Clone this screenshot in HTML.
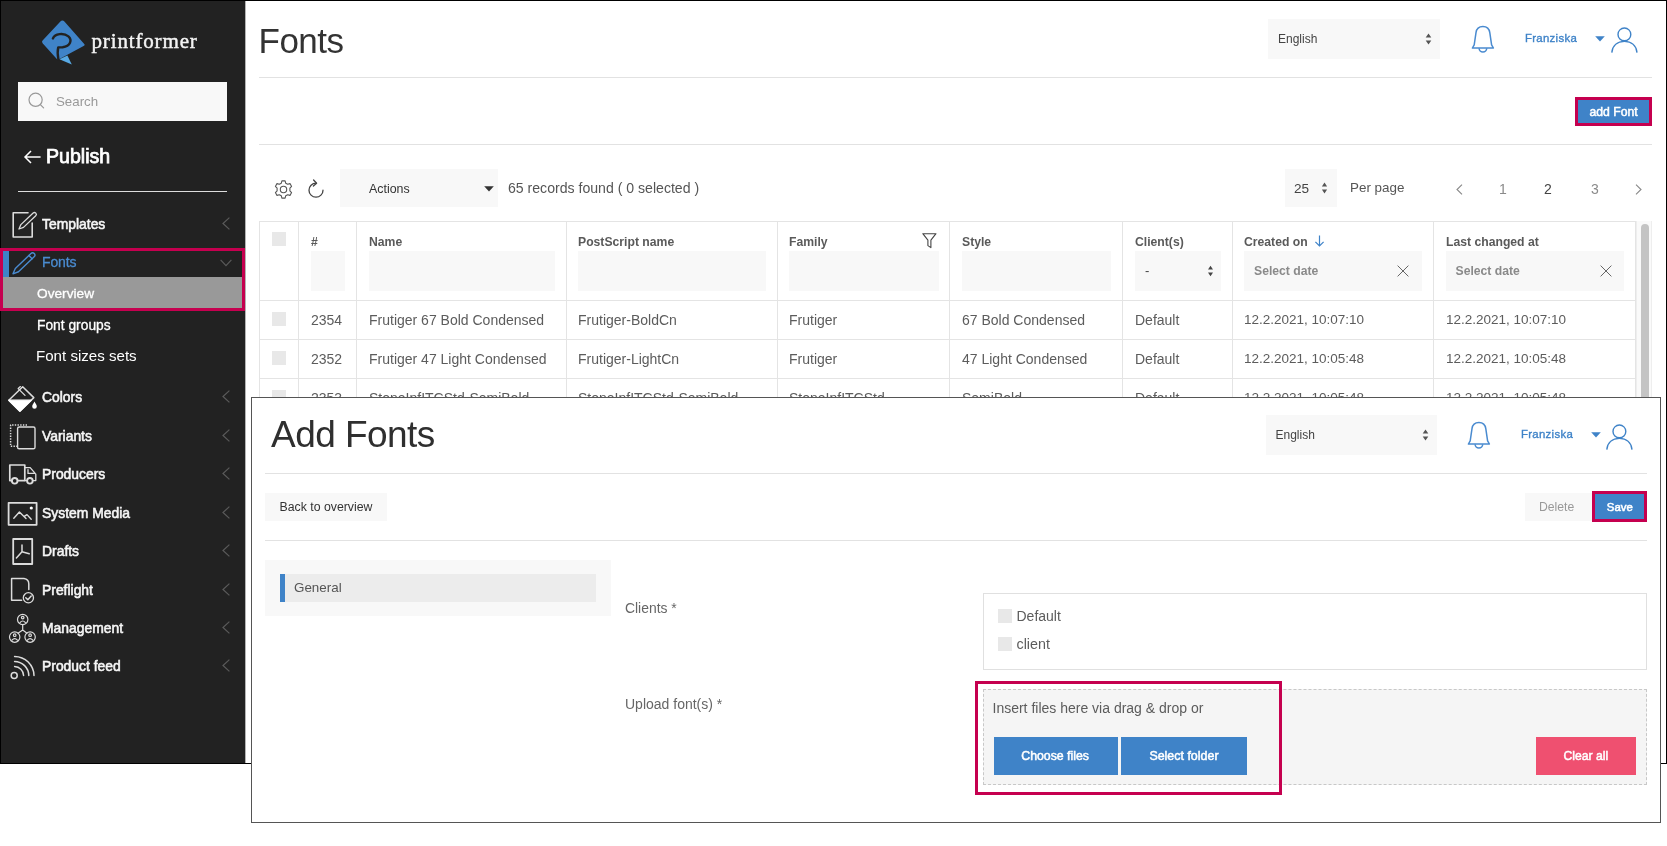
<!DOCTYPE html>
<html>
<head>
<meta charset="utf-8">
<title>Fonts</title>
<style>
*{box-sizing:border-box;margin:0;padding:0}
html,body{width:1667px;height:846px;background:#fff;overflow:hidden}
body{will-change:transform;font-family:"Liberation Sans",sans-serif;color:#333;position:relative;font-size:13px}
.a{position:absolute}
.t{position:absolute;white-space:nowrap;line-height:20px;height:20px}
.b{font-weight:700}
svg{position:absolute;overflow:visible}
/* frames */
#s1{left:0;top:0;width:1667px;height:764px;border:1px solid #000;background:#fff}
#side{left:1px;top:1px;width:244px;height:762px;background:#222}
#s2{left:251px;top:397px;width:1410px;height:426px;border:1px solid #555;background:#fff}
.hr{position:absolute;height:1px;background:#e2e2e2}
.m{color:#f6f6f6;font-size:13.9px;left:42px;-webkit-text-stroke:.55px #f6f6f6}
.chev{left:222px;width:8px;height:13px}
.fbox{position:absolute;background:#f8f8f8}
.vl{position:absolute;width:1px;background:#e4e4e4}
.hl{position:absolute;height:1px;background:#e4e4e4}
.cb{position:absolute;width:14px;height:14px;background:#e8e8e8}
.th{font-size:12.2px;font-weight:700;color:#5a5a5a}
.td{font-size:14px;color:#5c5c5c}
.dt{font-size:13.5px}
.pink{position:absolute;border:2px solid #c5004f}
</style>
</head>
<body>
<!-- ============ SCREEN 1 ============ -->
<div id="s1" class="a"></div>
<div id="side" class="a"></div>
<div class="a" style="left:245px;top:1px;width:1px;height:762px;background:#b4b4b4"></div>

<!--SIDEBAR-->
<!-- logo -->
<svg class="a" style="left:0;top:0" width="246" height="80" viewBox="0 0 246 80">
  <path d="M62.4 20.6 Q61.2 20.6 60.4 21.6 L42.6 40.6 Q41.4 41.9 42.6 43.2 L56.6 58.8 Q57.6 59.9 59 59.3 L83.6 46 Q85.6 44.8 83.8 43.4 L64.4 21.6 Q63.5 20.6 62.4 20.6Z" fill="#3f83c8"/>
  <path d="M59.4 59.2 L67.4 55.6 L71.8 64.6 Z" fill="#58a9e4"/>
  <path d="M52.9 38.4 C55 33.6 63.6 32.6 68.4 36.4 C72.4 40 70.6 46.4 62.6 47.2 L58.2 47.4 C57.4 50.8 57.6 55 58.4 59.4" fill="none" stroke="#222" stroke-width="2.4" stroke-linecap="round" stroke-linejoin="round"/>
</svg>
<div class="t" style="left:91.5px;top:28.7px;height:24px;line-height:24px;font-family:'Liberation Serif',serif;font-size:21px;letter-spacing:.85px;color:#f4f4f4;-webkit-text-stroke:.45px #f4f4f4">printformer</div>
<!-- search -->
<div class="a" style="left:18px;top:82px;width:209px;height:39px;background:#f8f8f8"></div>
<svg style="left:28px;top:92px" width="18" height="18" viewBox="0 0 18 18"><circle cx="7.6" cy="7.8" r="6.6" fill="none" stroke="#999" stroke-width="1.2"/><path d="M12.4 12.6 L15.6 15.8" stroke="#999" stroke-width="1.2" stroke-linecap="round"/></svg>
<div class="t" style="left:56px;top:92px;font-size:13.3px;color:#999">Search</div>
<!-- publish -->
<svg style="left:24px;top:150px" width="18" height="14" viewBox="0 0 18 14"><path d="M16.6 7 H1.2 M7 1 L1 7 L7 13" fill="none" stroke="#fff" stroke-width="1.5"/></svg>
<div class="t" style="left:46px;top:143.5px;height:24px;line-height:24px;font-size:19.6px;color:#fff;-webkit-text-stroke:.75px #fff">Publish</div>
<div class="a" style="left:18px;top:191px;width:209px;height:1px;background:#ddd"></div>

<!-- menu -->
<div class="t m" style="top:214px">Templates</div>
<div class="a" style="left:2px;top:250px;width:7px;height:27px;background:#3f83c8"></div>
<div class="t" style="left:42px;top:252px;font-size:14px;color:#4a8bd0;letter-spacing:-.15px;-webkit-text-stroke:.3px #4a8bd0">Fonts</div>
<div class="a" style="left:2px;top:277px;width:241px;height:32px;background:#999"></div>
<div class="t" style="left:37px;top:283.5px;font-size:13.7px;color:#fff;-webkit-text-stroke:.3px #fff">Overview</div>
<div class="t" style="left:37px;top:316px;font-size:13.8px;color:#fff;-webkit-text-stroke:.3px #fff">Font groups</div>
<div class="t" style="left:36px;top:346px;font-size:15.1px;color:#fff">Font sizes sets</div>
<div class="t m" style="top:387px">Colors</div>
<div class="t m" style="top:426px">Variants</div>
<div class="t m" style="top:464px">Producers</div>
<div class="t m" style="top:503px">System Media</div>
<div class="t m" style="top:541px">Drafts</div>
<div class="t m" style="top:580px">Preflight</div>
<div class="t m" style="top:618px">Management</div>
<div class="t m" style="top:656px">Product feed</div>
<!-- chevrons -->
<svg class="chev" style="top:217px" viewBox="0 0 8 13"><path d="M7.4 .6 L1 6.5 L7.4 12.4" fill="none" stroke="#5a5a5a" stroke-width="1.2"/></svg>
<svg style="left:220px;top:259px" width="12" height="8" viewBox="0 0 12 8"><path d="M.6 .8 L6 6.6 L11.4 .8" fill="none" stroke="#5a5a5a" stroke-width="1.2"/></svg>
<svg class="chev" style="top:390px" viewBox="0 0 8 13"><path d="M7.4 .6 L1 6.5 L7.4 12.4" fill="none" stroke="#5a5a5a" stroke-width="1.2"/></svg>
<svg class="chev" style="top:429px" viewBox="0 0 8 13"><path d="M7.4 .6 L1 6.5 L7.4 12.4" fill="none" stroke="#5a5a5a" stroke-width="1.2"/></svg>
<svg class="chev" style="top:467px" viewBox="0 0 8 13"><path d="M7.4 .6 L1 6.5 L7.4 12.4" fill="none" stroke="#5a5a5a" stroke-width="1.2"/></svg>
<svg class="chev" style="top:506px" viewBox="0 0 8 13"><path d="M7.4 .6 L1 6.5 L7.4 12.4" fill="none" stroke="#5a5a5a" stroke-width="1.2"/></svg>
<svg class="chev" style="top:544px" viewBox="0 0 8 13"><path d="M7.4 .6 L1 6.5 L7.4 12.4" fill="none" stroke="#5a5a5a" stroke-width="1.2"/></svg>
<svg class="chev" style="top:583px" viewBox="0 0 8 13"><path d="M7.4 .6 L1 6.5 L7.4 12.4" fill="none" stroke="#5a5a5a" stroke-width="1.2"/></svg>
<svg class="chev" style="top:621px" viewBox="0 0 8 13"><path d="M7.4 .6 L1 6.5 L7.4 12.4" fill="none" stroke="#5a5a5a" stroke-width="1.2"/></svg>
<svg class="chev" style="top:659px" viewBox="0 0 8 13"><path d="M7.4 .6 L1 6.5 L7.4 12.4" fill="none" stroke="#5a5a5a" stroke-width="1.2"/></svg>
<svg class="a" style="left:0;top:0" width="60" height="764" viewBox="0 0 60 764" fill="none" stroke="#dcdcdc" stroke-width="1.6" stroke-linejoin="round" stroke-linecap="round">
  <!-- templates -->
  <path d="M28 212.8 H13.2 V237 H32.2 V223"/>
  <g transform="translate(19,229) rotate(-43.3)" stroke-width="1.3"><path d="M0 0 L4.4 -1.9 H21.2 a1.9 1.9 0 0 1 0 3.8 H4.4 Z"/></g>
  <!-- fonts pencil -->
  <g transform="translate(13,273.8) rotate(-43.6)" stroke="#4a8bd0" stroke-width="1.4"><path d="M0 0 L5.4 -2.3 H27 a2.3 2.3 0 0 1 0 4.6 H5.4 Z"/><path d="M24.2 -2.3 V2.3"/></g>
  <!-- colors bucket -->
  <path d="M8.8 400.2 L22.7 386.8 L33.8 397.6 L19.9 411.2 Z" stroke-width="1.5"/>
  <path d="M8.8 400.2 H31.2 L19.9 411.2 Z" fill="#fff" stroke="#fff" stroke-width="1.2"/>
  <path d="M18.2 388.6 L25 395.4 M18.2 388.6 L20.4 386.6" stroke-width="1.3"/>
  <path d="M34.5 401.6 C35.6 403.6 36.8 405 36.8 406.4 a2.3 2.3 0 0 1 -4.6 0 C32.2 405 33.4 403.6 34.5 401.6Z" fill="#fff" stroke="none"/>
  <!-- variants -->
  <rect x="17.6" y="427" width="17.4" height="21.8" rx="1.6" stroke-width="1.4"/>
  <path d="M27 425 H10.6 V446.2 H17" stroke-width="1.5" stroke-dasharray="1.4 1.3" stroke-linecap="butt"/>
  <!-- truck -->
  <g stroke="#ddd" stroke-width="1.7">
  <path d="M11.6 480.6 H9.8 V465 H24.8 V480.6 H17.8"/>
  <path d="M24.8 467.6 H30.2 L35.8 474.2 V480.6 H33 M26.8 480.6 H24.8 M28 469.6 V473.4 H35.2" stroke-width="1.3"/>
  <circle cx="14.7" cy="480.8" r="2.8" stroke-width="1.9"/><circle cx="29.9" cy="480.8" r="2.8" stroke-width="1.9"/>
  </g>
  <!-- system media -->
  <rect x="8.6" y="502.8" width="28" height="22" stroke-width="1.8"/>
  <path d="M13.8 518.2 L19.4 512 L26 518.6 M24.2 516.4 L27 514.6 L31.2 519.2" stroke-width="1.4"/>
  <circle cx="31.3" cy="508" r="1.6" fill="#fff" stroke="none"/>
  <!-- drafts -->
  <rect x="13.2" y="539" width="19" height="25" stroke-width="1.8"/>
  <path d="M22 545 V551.8 L16.4 558 M22 551.8 L29.2 553.8" stroke-width="1.5"/>
  <!-- preflight -->
  <path d="M21.6 600.2 H11.6 V578.6 H24 Q28.8 579.2 28.8 584 V589.4" stroke-width="1.5"/>
  <circle cx="28.4" cy="597.8" r="5.1" stroke-width="1.3"/>
  <path d="M25.8 597.8 L27.8 599.8 L31.2 596" stroke-width="1.5"/>
  <!-- management -->
  <g stroke-width="1.2">
  <circle cx="22.7" cy="619.5" r="5.2"/><circle cx="14.7" cy="637.1" r="5.2"/><circle cx="30.1" cy="637.1" r="5.2"/>
  <path d="M22.7 624.8 V630 L18 633.2 M22.7 630 L27 633.2"/>
  <circle cx="22.7" cy="617.6" r="1.3"/><path d="M20 622.6 Q22.7 619.4 25.4 622.6"/>
  <circle cx="14.7" cy="635.2" r="1.3"/><path d="M12 640.2 Q14.7 637 17.4 640.2"/>
  <circle cx="30.1" cy="635.2" r="1.3"/><path d="M27.4 640.2 Q30.1 637 32.8 640.2"/>
  </g>
  <!-- product feed -->
  <g stroke-width="1.5">
  <circle cx="14.2" cy="675.6" r="3"/>
  <path d="M14.6 666.6 A9.2 9.2 0 0 1 23.6 675.6"/>
  <path d="M14.6 661.4 A14.4 14.4 0 0 1 28.8 675.6"/>
  <path d="M14.6 656.4 A19.6 19.6 0 0 1 34 675.6"/>
  </g>
</svg>

<!-- pink highlight around Fonts/Overview -->
<div class="pink" style="left:0;top:248px;width:245px;height:63px;border-width:3px"></div>
<!--/SIDEBAR-->

<!--S1MAIN-->
<div class="t" style="left:258.5px;top:17.6px;height:46px;line-height:46px;font-size:35px;letter-spacing:-.5px;color:#333">Fonts</div>
<!-- header right -->
<div class="a" style="left:1268px;top:19px;width:172px;height:40px;background:#f8f8f8"></div>
<div class="t" style="left:1278px;top:29px;font-size:12px;color:#444">English</div>
<svg style="left:1425px;top:33px" width="7" height="12" viewBox="0 0 7 12"><path d="M3.5 .4 L6.3 4.6 H.7Z M3.5 11.6 L6.3 7.4 H.7Z" fill="#555"/></svg>
<svg style="left:1471px;top:25px" width="24" height="28" viewBox="1471 25 24 28" fill="none" stroke="#4a8bd0" stroke-width="1.5" stroke-linejoin="round"><path d="M1482.9 26.4 C1479 26.4 1476.5 28.8 1476 32.6 L1474.2 44.8 L1472.4 48 H1493.4 L1491.6 44.8 L1489.8 32.6 C1489.3 28.8 1486.8 26.4 1482.9 26.4Z"/><path d="M1479.1 48.2 a3.8 3.8 0 0 0 7.6 0"/></svg>
<div class="t" style="left:1525px;top:28px;font-size:11.4px;letter-spacing:.3px;color:#3f83c8;-webkit-text-stroke:.35px #3f83c8">Franziska</div>
<svg style="left:1595px;top:36px" width="10" height="6" viewBox="0 0 10 6"><path d="M.2 .2 H9.8 L5 5.6Z" fill="#3f83c8"/></svg>
<svg style="left:1611px;top:27px" width="27" height="26" viewBox="0 0 27 26" fill="none" stroke="#3f83c8" stroke-width="1.4"><circle cx="13.4" cy="7.4" r="6.4"/><path d="M.8 25.6 C1.6 18.4 6.6 14.4 13.4 14.4 C20.2 14.4 25.2 18.4 26 25.6"/></svg>
<div class="hr" style="left:259px;top:77px;width:1393px"></div>
<!-- add font -->
<div class="a" style="left:1575px;top:97.3px;width:77px;height:28.8px;background:#3f83c8;border:3px solid #c5004f"></div>
<div class="t" style="left:1589.5px;top:102px;font-size:12.2px;color:#fff;-webkit-text-stroke:.5px #fff">add Font</div>
<div class="hr" style="left:259px;top:144px;width:1393px"></div>
<!-- toolbar -->
<svg style="left:274px;top:179.8px" width="19" height="19" viewBox="-9.5 -9.5 19 19" fill="none" stroke="#555" stroke-width="1.1" stroke-linejoin="round">
<path d="M-1.6 -8.6 H1.6 L2.2 -6.3 L4.2 -5.2 L6.5 -5.9 L8.1 -3.1 L6.4 -1.4 V1.4 L8.1 3.1 L6.5 5.9 L4.2 5.2 L2.2 6.3 L1.6 8.6 H-1.6 L-2.2 6.3 L-4.2 5.2 L-6.5 5.9 L-8.1 3.1 L-6.4 1.4 V-1.4 L-8.1 -3.1 L-6.5 -5.9 L-4.2 -5.2 L-2.2 -6.3Z"/><circle r="3.2"/></svg>
<svg style="left:307px;top:179px" width="19" height="20" viewBox="0 0 19 20" fill="none" stroke="#444" stroke-width="1.3" stroke-linecap="round" stroke-linejoin="round"><path d="M9 4.2 A7 7 0 1 0 16 11.2"/><path d="M6.6 1 L9.6 4.2 L6.4 7"/></svg>
<div class="a" style="left:340px;top:169px;width:158px;height:38px;background:#f8f8f8"></div>
<div class="t" style="left:369px;top:178.5px;font-size:12.4px;color:#333">Actions</div>
<svg style="left:484px;top:186px" width="10" height="6" viewBox="0 0 10 6"><path d="M.2 .2 H9.8 L5 5.4Z" fill="#333"/></svg>
<div class="t" style="left:508px;top:178px;font-size:14.1px;color:#555">65 records found ( 0 selected )</div>
<div class="a" style="left:1285px;top:169px;width:52px;height:38px;background:#f8f8f8"></div>
<div class="t" style="left:1294px;top:178.5px;font-size:13.6px;color:#444">25</div>
<svg style="left:1321px;top:182px" width="7" height="12" viewBox="0 0 7 12"><path d="M3.5 .6 L6.1 4.6 H.9Z M3.5 11.4 L6.1 7.4 H.9Z" fill="#555"/></svg>
<div class="t" style="left:1350px;top:177.5px;font-size:13.4px;color:#555">Per page</div>
<svg style="left:1456px;top:184px" width="7" height="11" viewBox="0 0 7 11"><path d="M6 .6 L1 5.5 L6 10.4" fill="none" stroke="#888" stroke-width="1.1"/></svg>
<div class="t" style="left:1493px;width:20px;text-align:center;top:178.5px;font-size:14px;color:#8a8a8a">1</div>
<div class="t" style="left:1538px;width:20px;text-align:center;top:178.5px;font-size:14px;color:#444">2</div>
<div class="t" style="left:1585px;width:20px;text-align:center;top:178.5px;font-size:14px;color:#8a8a8a">3</div>
<svg style="left:1635px;top:184px" width="7" height="11" viewBox="0 0 7 11"><path d="M1 .6 L6 5.5 L1 10.4" fill="none" stroke="#888" stroke-width="1.1"/></svg>
<!-- table grid -->
<div class="hl" style="left:259px;top:221px;width:1377px"></div>
<div class="hl" style="left:259px;top:300px;width:1377px"></div>
<div class="hl" style="left:259px;top:339px;width:1377px"></div>
<div class="hl" style="left:259px;top:378px;width:1377px"></div>
<div class="vl" style="left:259px;top:221px;height:177px"></div>
<div class="vl" style="left:298px;top:221px;height:177px"></div>
<div class="vl" style="left:356px;top:221px;height:177px"></div>
<div class="vl" style="left:566px;top:221px;height:177px"></div>
<div class="vl" style="left:777px;top:221px;height:177px"></div>
<div class="vl" style="left:949px;top:221px;height:177px"></div>
<div class="vl" style="left:1122px;top:221px;height:177px"></div>
<div class="vl" style="left:1232px;top:221px;height:177px"></div>
<div class="vl" style="left:1433px;top:221px;height:177px"></div>
<div class="vl" style="left:1635px;top:221px;height:177px"></div>
<!-- scrollbar -->
<div class="a" style="left:1636px;top:221px;width:16px;height:177px;background:#fafafa;border-left:1px solid #eee;border-right:1px solid #eee"></div>
<div class="a" style="left:1640.5px;top:223.5px;width:8.5px;height:180px;background:#c4c4c4;border-radius:4.5px"></div>
<!-- header cells -->
<div class="cb" style="left:272px;top:232px"></div>
<div class="t th" style="left:311px;top:231.6px">#</div>
<div class="t th" style="left:369px;top:231.6px">Name</div>
<div class="t th" style="left:578px;top:231.6px">PostScript name</div>
<div class="t th" style="left:789px;top:231.6px">Family</div>
<div class="t th" style="left:962px;top:231.6px">Style</div>
<div class="t th" style="left:1135px;top:231.6px">Client(s)</div>
<div class="t th" style="left:1244px;top:231.6px">Created on</div>
<div class="t th" style="left:1446px;top:231.6px">Last changed at</div>
<svg style="left:1314px;top:235px" width="11" height="12" viewBox="0 0 11 12"><path d="M5.5 .6 V10.8 M1.4 6.8 L5.5 10.9 L9.6 6.8" fill="none" stroke="#3f83c8" stroke-width="1.2"/></svg>
<svg style="left:922px;top:233px" width="15" height="16" viewBox="0 0 15 16"><path d="M.8 .7 H14 L8.9 7.2 V14.6 L5.9 12.6 V7.2Z" fill="none" stroke="#444" stroke-width="1.1" stroke-linejoin="round"/></svg>
<!-- filters -->
<div class="fbox" style="left:311px;top:251px;width:34px;height:40px"></div>
<div class="fbox" style="left:369px;top:251px;width:186px;height:40px"></div>
<div class="fbox" style="left:578px;top:251px;width:188px;height:40px"></div>
<div class="fbox" style="left:789px;top:251px;width:150px;height:40px"></div>
<div class="fbox" style="left:962px;top:251px;width:149px;height:40px"></div>
<div class="fbox" style="left:1135px;top:251px;width:86px;height:40px"></div>
<div class="fbox" style="left:1244px;top:251px;width:178px;height:40px"></div>
<div class="fbox" style="left:1446px;top:251px;width:178px;height:40px"></div>
<div class="t" style="left:1145px;top:260.5px;font-size:13px;color:#444">-</div>
<svg style="left:1207px;top:265px" width="7" height="12" viewBox="0 0 7 12"><path d="M3.5 .8 L6 4.6 H1Z M3.5 11.2 L6 7.4 H1Z" fill="#444"/></svg>
<div class="t b" style="left:1254px;top:261px;font-size:12.2px;color:#8a8a8a">Select date</div>
<div class="t b" style="left:1455.5px;top:261px;font-size:12.2px;color:#8a8a8a">Select date</div>
<svg style="left:1397px;top:265px" width="12" height="12" viewBox="0 0 12 12"><path d="M.6 .6 L11.4 11.4 M11.4 .6 L.6 11.4" stroke="#666" stroke-width="1"/></svg>
<svg style="left:1599.5px;top:265px" width="12" height="12" viewBox="0 0 12 12"><path d="M.6 .6 L11.4 11.4 M11.4 .6 L.6 11.4" stroke="#666" stroke-width="1"/></svg>
<!-- rows -->
<div class="cb" style="left:272px;top:312px"></div>
<div class="cb" style="left:272px;top:351px"></div>
<div class="cb" style="left:272px;top:390px"></div>
<div class="t td" style="left:311px;top:309.8px">2354</div>
<div class="t td" style="left:369px;top:309.8px">Frutiger 67 Bold Condensed</div>
<div class="t td" style="left:578px;top:309.8px">Frutiger-BoldCn</div>
<div class="t td" style="left:789px;top:309.8px">Frutiger</div>
<div class="t td" style="left:962px;top:309.8px">67 Bold Condensed</div>
<div class="t td" style="left:1135px;top:309.8px">Default</div>
<div class="t td dt" style="left:1244px;top:309.8px">12.2.2021, 10:07:10</div>
<div class="t td dt" style="left:1446px;top:309.8px">12.2.2021, 10:07:10</div>
<div class="t td" style="left:311px;top:348.8px">2352</div>
<div class="t td" style="left:369px;top:348.8px">Frutiger 47 Light Condensed</div>
<div class="t td" style="left:578px;top:348.8px">Frutiger-LightCn</div>
<div class="t td" style="left:789px;top:348.8px">Frutiger</div>
<div class="t td" style="left:962px;top:348.8px">47 Light Condensed</div>
<div class="t td" style="left:1135px;top:348.8px">Default</div>
<div class="t td dt" style="left:1244px;top:348.8px">12.2.2021, 10:05:48</div>
<div class="t td dt" style="left:1446px;top:348.8px">12.2.2021, 10:05:48</div>
<div class="t td" style="left:311px;top:387.8px">2353</div>
<div class="t td" style="left:369px;top:387.8px">StoneInfITCStd-SemiBold</div>
<div class="t td" style="left:578px;top:387.8px">StoneInfITCStd-SemiBold</div>
<div class="t td" style="left:789px;top:387.8px">StoneInfITCStd</div>
<div class="t td" style="left:962px;top:387.8px">SemiBold</div>
<div class="t td" style="left:1135px;top:387.8px">Default</div>
<div class="t td dt" style="left:1244px;top:387.8px">12.2.2021, 10:05:48</div>
<div class="t td dt" style="left:1446px;top:387.8px">12.2.2021, 10:05:48</div>
<!--/S1MAIN-->

<!-- ============ SCREEN 2 ============ -->
<div id="s2" class="a"></div>

<!--S2MAIN-->
<div class="t" style="left:271px;top:410px;height:50px;line-height:50px;font-size:37px;letter-spacing:-.55px;color:#2f2f2f">Add Fonts</div>
<div class="a" style="left:1266px;top:415px;width:171px;height:40px;background:#f8f8f8"></div>
<div class="t" style="left:1275.5px;top:425px;font-size:12px;color:#444">English</div>
<svg style="left:1421.5px;top:429px" width="7" height="12" viewBox="0 0 7 12"><path d="M3.5 .4 L6.3 4.6 H.7Z M3.5 11.6 L6.3 7.4 H.7Z" fill="#555"/></svg>
<svg style="left:1467.1px;top:421.2px" width="24" height="28" viewBox="1471 25 24 28" fill="none" stroke="#4a8bd0" stroke-width="1.5" stroke-linejoin="round"><path d="M1482.9 26.4 C1479 26.4 1476.5 28.8 1476 32.6 L1474.2 44.8 L1472.4 48 H1493.4 L1491.6 44.8 L1489.8 32.6 C1489.3 28.8 1486.8 26.4 1482.9 26.4Z"/><path d="M1479.1 48.2 a3.8 3.8 0 0 0 7.6 0"/></svg>
<div class="t" style="left:1521px;top:424.3px;font-size:11.4px;letter-spacing:.3px;color:#3f83c8;-webkit-text-stroke:.35px #3f83c8">Franziska</div>
<svg style="left:1590.5px;top:432.3px" width="10" height="6" viewBox="0 0 10 6"><path d="M.2 .2 H9.8 L5 5.6Z" fill="#3f83c8"/></svg>
<svg style="left:1606px;top:423.5px" width="27" height="26" viewBox="0 0 27 26" fill="none" stroke="#3f83c8" stroke-width="1.4"><circle cx="13.4" cy="7.4" r="6.4"/><path d="M.8 25.6 C1.6 18.4 6.6 14.4 13.4 14.4 C20.2 14.4 25.2 18.4 26 25.6"/></svg>
<div class="hr" style="left:265px;top:473px;width:1382px"></div>
<div class="a" style="left:265px;top:493px;width:122px;height:28px;background:#f8f8f8"></div>
<div class="t" style="left:279.5px;top:497.1px;font-size:12.3px;color:#333">Back to overview</div>
<div class="a" style="left:1525px;top:493px;width:68px;height:28px;background:#f8f8f8"></div>
<div class="t" style="left:1539px;top:497.3px;font-size:12.2px;color:#999">Delete</div>
<div class="a" style="left:1592px;top:491px;width:55px;height:31px;background:#3f83c8;border:3px solid #c5004f"></div>
<div class="t" style="left:1606.8px;top:497.3px;font-size:11.4px;color:#fff;-webkit-text-stroke:.55px #fff">Save</div>
<div class="hr" style="left:265px;top:540px;width:1382px"></div>
<!-- tabs -->
<div class="a" style="left:265px;top:559.5px;width:345.7px;height:56px;background:#f8f8f8"></div>
<div class="a" style="left:280px;top:574px;width:316px;height:28px;background:#ececec"></div>
<div class="a" style="left:280px;top:574px;width:5px;height:28px;background:#3f83c8"></div>
<div class="t" style="left:294px;top:577.8px;font-size:13.4px;color:#555">General</div>
<!-- form -->
<div class="t" style="left:625px;top:598px;font-size:13.9px;color:#666">Clients *</div>
<div class="a" style="left:983px;top:593px;width:664px;height:77px;border:1px solid #e0e0e0;background:#fff"></div>
<div class="cb" style="left:998px;top:609px"></div>
<div class="t" style="left:1016.5px;top:606.3px;font-size:14px;color:#5c5c5c">Default</div>
<div class="cb" style="left:998px;top:637px"></div>
<div class="t" style="left:1016.5px;top:634.4px;font-size:14.3px;color:#5c5c5c">client</div>
<div class="t" style="left:625px;top:694px;font-size:14px;color:#666">Upload font(s) *</div>
<div class="a" style="left:983px;top:689px;width:664px;height:96px;border:1px dashed #c8c8c8;background:#f5f5f5"></div>
<div class="t" style="left:992.5px;top:698.3px;font-size:14px;color:#5c5c5c">Insert files here via drag &amp; drop or</div>
<div class="a" style="left:993.5px;top:737px;width:124.5px;height:37.5px;background:#3f83c8"></div>
<div class="t" style="left:1021.3px;top:746px;font-size:12.3px;color:#fff;-webkit-text-stroke:.5px #fff">Choose files</div>
<div class="a" style="left:1121px;top:737px;width:126px;height:37.5px;background:#3f83c8"></div>
<div class="t" style="left:1149.4px;top:746px;font-size:12.45px;color:#fff;-webkit-text-stroke:.5px #fff">Select folder</div>
<div class="a" style="left:1536px;top:737px;width:100px;height:37.5px;background:#ef5070"></div>
<div class="t" style="left:1563.5px;top:746px;font-size:12.2px;color:#fff;-webkit-text-stroke:.5px #fff">Clear all</div>
<div class="pink" style="left:974.5px;top:681px;width:307.5px;height:113.6px;border-width:3px"></div>
<!--/S2MAIN-->

</body>
</html>
